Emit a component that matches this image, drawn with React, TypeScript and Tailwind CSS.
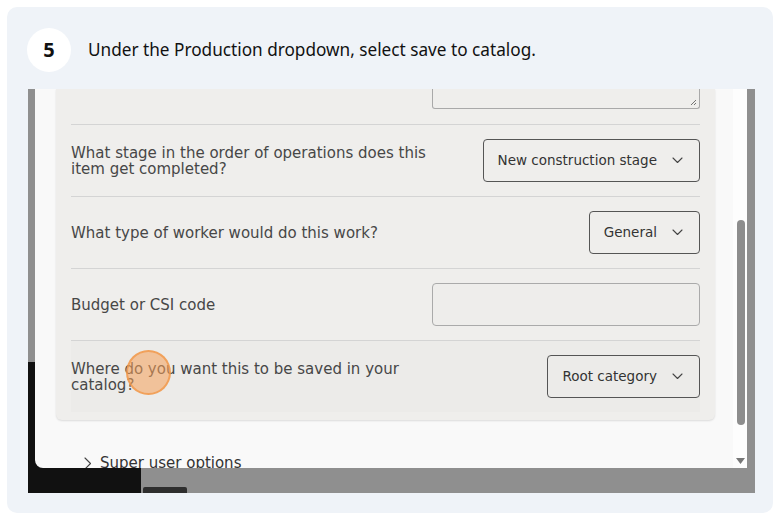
import React from "react";

const LABEL_FONT = { fontFamily: '"DejaVu Sans", "Liberation Sans", sans-serif' };

function Chevron() {
  return (
    <svg width="11" height="7" viewBox="0 0 11 7" fill="none" className="shrink-0">
      <path d="M1 1l4.5 4.5L10 1" stroke="#444" strokeWidth="1.1" strokeLinecap="round" strokeLinejoin="round" />
    </svg>
  );
}

function Select({ label }: { label: string }) {
  return (
    <div className="h-[43px] flex items-center gap-[15px] pl-[14px] pr-[16px] border border-[#555] rounded-[4px] text-[13.5px] text-[#333]">
      <span>{label}</span>
      <Chevron />
    </div>
  );
}

function Row({ label, children, hover }: { label: React.ReactNode; children: React.ReactNode; hover?: boolean }) {
  return (
    <div className={`h-[72px] border-t border-[#d4d4d4] flex items-center justify-between ${hover ? "bg-[#ecebe9]" : ""}`}>
      <div className="text-[15px] leading-[16px] text-[#474747]">{label}</div>
      {children}
    </div>
  );
}

export default function App() {
  return (
    <div className="w-[781px] h-[520px] bg-white p-[7px]">
      <div className="w-[766px] h-[506px] rounded-[10px] bg-[#eff3f8] pl-[21px] pt-[21px]">
        <div className="flex items-center h-[44px] -ml-[1px]">
          <div
            className="w-[44px] h-[44px] rounded-full bg-white flex items-center justify-center text-[20px] font-bold text-[#111]"
            style={{ fontFamily: '"Noto Sans", sans-serif' }}
          >
            5
          </div>
          <div className="ml-[17px] text-[17.2px] text-[#111]" style={{ fontFamily: '"Noto Sans", sans-serif' }}>
            Under the Production dropdown, select save to catalog.
          </div>
        </div>

        <div className="relative mt-[17px] w-[727px] h-[404px] bg-[#8f8f8f] overflow-hidden" style={LABEL_FONT}>
          <div className="absolute left-0 top-[273px] bottom-0 w-[113px] bg-[#111]" />
          <div className="absolute left-[115px] top-[398px] w-[44px] h-[8px] bg-[#2e2e2e] rounded-t-[2px]" />

          <div className="relative z-10 ml-[7px] w-[712px] h-[379px] bg-[#f9f9f9] rounded-bl-[8px] flex overflow-hidden">
            <div className="flex-1 pl-[21px]">
              <div className="w-[659px] bg-[#efeeec] rounded-b-[6px] shadow-[0_1px_2px_rgba(0,0,0,0.12)] pl-[15px] pr-[15px] pb-[8px]">
                <div className="flex justify-end">
                  <div className="relative w-[268px] h-[20px] border border-t-0 border-[#a9a9a9] rounded-b-[3px]">
                    <svg width="7" height="7" viewBox="0 0 7 7" className="absolute right-[2px] bottom-[2px]">
                      <path d="M6 1L1 6M6 4L4 6" stroke="#666" strokeWidth="0.9" />
                    </svg>
                  </div>
                </div>
                <div className="mt-[15px]">
                  <Row label={<>What stage in the order of operations does this<br />item get completed?</>}>
                    <Select label="New construction stage" />
                  </Row>
                  <Row label="What type of worker would do this work?">
                    <Select label="General" />
                  </Row>
                  <Row label="Budget or CSI code">
                    <div className="w-[268px] h-[43px] border border-[#aaa] rounded-[4px] bg-[#eeedeb]" />
                  </Row>
                  <Row hover label={<>Where do you want this to be saved in your<br />catalog?</>}>
                    <Select label="Root category" />
                  </Row>
                </div>
              </div>
              <div className="flex items-center gap-[8px] ml-[28px] mt-[32px] text-[15px] text-[#333]">
                <svg width="8" height="13" viewBox="0 0 8 13" fill="none">
                  <path d="M1 1l5.5 5.5L1 12" stroke="#444" strokeWidth="1.1" strokeLinecap="round" strokeLinejoin="round" />
                </svg>
                <span>Super user options</span>
              </div>
            </div>
            <div className="w-[14px] bg-[#fdfdfd] relative">
              <div className="absolute left-[4px] top-[131px] w-[8px] h-[205px] rounded-full bg-[#8d8d8d]" />
              <svg width="9" height="6" viewBox="0 0 9 6" className="absolute left-[3px] top-[369px]">
                <path d="M0 0h9L4.5 6z" fill="#777" />
              </svg>
            </div>

            <div className="absolute left-[91px] top-[261px] w-[45px] h-[45px] rounded-full bg-[rgba(245,160,90,0.55)] border-2 border-[rgba(240,150,70,0.75)]" />
          </div>
        </div>
      </div>
    </div>
  );
}
